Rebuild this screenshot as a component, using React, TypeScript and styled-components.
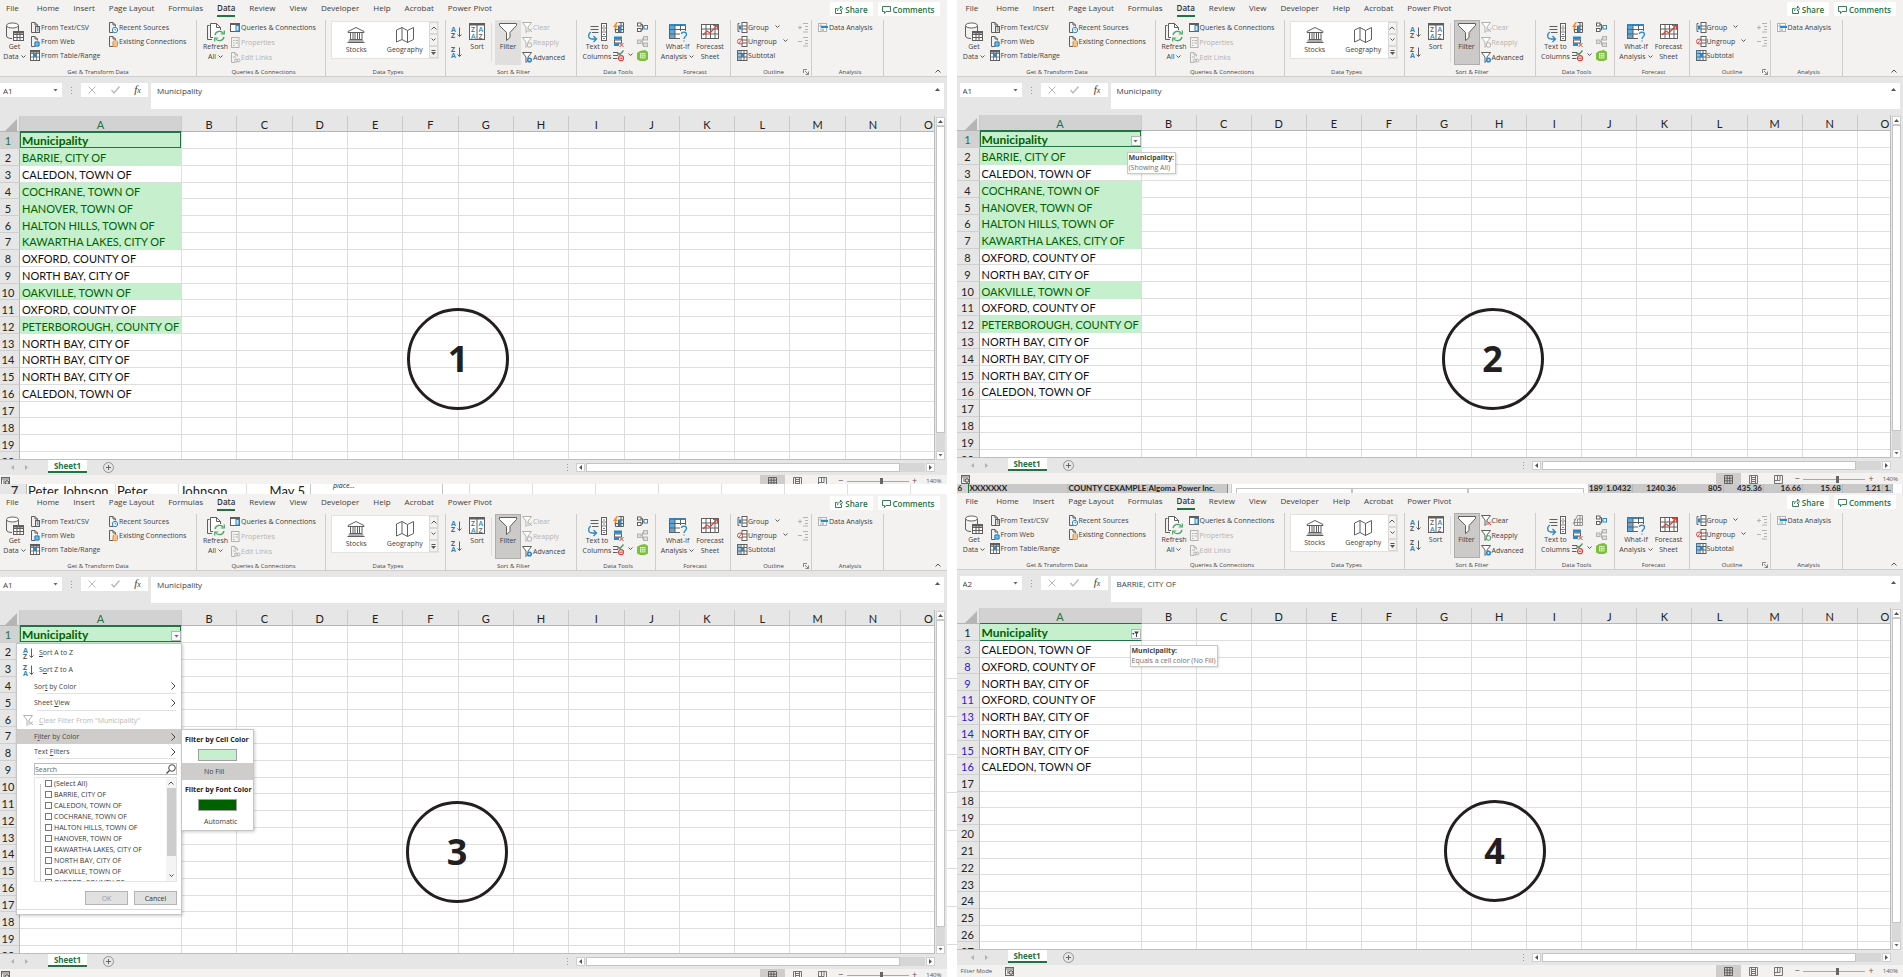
import React from "react";
import styled, { createGlobalStyle, css } from "styled-components";

const UI = `"Open Sans", "Noto Sans", sans-serif`;
const SHEET = `Lato, "Open Sans", sans-serif`;

const GlobalStyle = createGlobalStyle`
  * { box-sizing: border-box; }
  body { margin: 0; background: #fff; font-family: ${UI}; color: #404040; }
  button, input { font: inherit; color: inherit; margin: 0; padding: 0; border: 0; background: none; border-radius: 0; }
  button { white-space: nowrap; }
  svg { display: block; flex: none; overflow: visible; }
`;

/* ---------- icons ---------- */

const G = "#5f5f5f";
const B = "#2b88c8";
const L = "#b4b2b0";

type IconName =
  | "getData" | "csv" | "web" | "range" | "recent" | "existing" | "refresh" | "queries" | "properties"
  | "links" | "bank" | "map" | "sortAZ" | "sortZA" | "sort" | "funnel" | "clear" | "clearOn" | "reapply"
  | "reapplyOn" | "advanced" | "columns" | "flash" | "flashOff" | "dupes" | "validate" | "consolidate"
  | "relations" | "model" | "whatIf" | "forecast" | "group" | "ungroup" | "subtotal" | "showDetail"
  | "hideDetail" | "analysis" | "share" | "comment" | "chevDown" | "chevUp" | "chevRight" | "launcher"
  | "triDown" | "triUp" | "triLeft" | "triRight" | "more" | "cross" | "check" | "plus" | "search" | "macro"
  | "viewNormal" | "viewPage" | "viewBreak" | "corner" | "filtered" | "grip";

const page = (c: string) => <path d="M5 10.500H1.500V.5H5L7.500 3V4.500M5 .5V3H7.500" fill="none" stroke={c} />;
const smallFunnel = (c: string) => <path d="M.5.500H9.500L6 5V8.500L4 10.500V5Z" fill="#fff" stroke={c} />;

const icons: Record<IconName, [number, number, React.ReactNode]> = {
  getData: [20, 20, <>
    <path d="M1.500 3.500V14C1.500 15.500 4 16.500 7 16.500M13.500 3.500V9" fill="none" stroke={G} />
    <ellipse cx="7.500" cy="3.500" rx="6" ry="2.500" fill="#fff" stroke={G} />
    <rect x="8.500" y="9.500" width="10" height="9" fill="#fff" stroke={G} />
    <path d="M8.500 12.500H18.500M8.500 15.500H18.500M12 9.500V18.500M15 9.500V18.500" stroke={G} />
    <path d="M9 10.500H18" stroke={G} strokeWidth="2" /></>],
  csv: [11, 11, <>{page(G)}<rect x="5.500" y="4.500" width="4" height="6" fill="#ddd" stroke={G} /><path d="M7 6H8.500M7 8H8.500" stroke={G} /></>],
  web: [11, 11, <>{page(G)}<circle cx="7" cy="8" r="3" fill={B} /><path d="M4 8H10M7 5V11" stroke="#bfe0f5" strokeWidth=".6" /></>],
  range: [11, 11, <><rect x=".5" y=".5" width="9" height="10" fill="#fff" stroke={G} /><path d="M.5 3.500H9.500M.5 7H9.500M3.500 .5V10.500M6.500 .5V10.500" stroke={G} strokeWidth=".8" /><path d="M0 1.500H10" stroke={G} strokeWidth="2" /><rect x="3.500" y="3.500" width="3" height="3.500" fill={B} /></>],
  recent: [11, 11, <>{page(G)}<circle cx="7" cy="8" r="2.700" fill="#fff" stroke={B} /><path d="M7 6.500V8H8.500" fill="none" stroke={B} strokeWidth=".8" /></>],
  existing: [11, 11, <>{page(G)}<rect x="5" y="5" width="4.500" height="5.500" rx="1" fill="#fff" stroke="#e08a2c" /><path d="M5 7H9.500M5 9H9.500" stroke="#e08a2c" /></>],
  refresh: [20, 20, <>
    <path d="M3.500 3.500H1.500V17.500H6" fill="none" stroke={G} />
    <path d="M14.500 8V5.500L10.500 1.500H4.500V15.500H7M10.500 1.500V5.500H14.500" fill="#fff" stroke={G} />
    <circle cx="13.500" cy="14" r="6" fill="#f3f2f1" />
    <path d="M9 13A4.700 4.700 0 0 1 17.500 11.500M18 15A4.700 4.700 0 0 1 9.500 16.500" fill="none" stroke="#4aa564" strokeWidth="1.300" />
    <path d="M18.300 8.500V12H14.800M8.700 19.500V16H12.200" fill="none" stroke="#4aa564" strokeWidth="1.200" /></>],
  queries: [11, 11, <><rect x=".5" y="1.500" width="9" height="8" fill="#fff" stroke={G} /><path d="M0 2H10" stroke={G} strokeWidth="2" /><rect x="6" y="3.500" width="3" height="5.500" fill="#cfe6f5" stroke={B} /></>],
  properties: [11, 11, <><rect x="1.500" y=".5" width="7.500" height="10" fill="none" stroke={L} /><path d="M3 3.500H4.500M5.500 3.500H8M3 6H4.500M5.500 6H8M3 8.500H4.500" stroke={L} /></>],
  links: [11, 11, <>{page(L)}<circle cx="6" cy="8.500" r="1.500" fill="none" stroke={L} /><circle cx="8.500" cy="8.500" r="1.500" fill="none" stroke={L} /><path d="M3 5H6" stroke={L} /></>],
  bank: [20, 18, <>
    <path d="M2 5.500L10 1.500L18 5.500V6.500H2ZM3.500 13.500H16.500M2.500 15H17.500M1.500 16.500H18.500" fill="none" stroke={G} />
    <path d="M4.500 6.500V13M7 6.500V13M9 6.500V13M11.500 6.500V13M13.500 6.500V13M16 6.500V13" stroke={G} /></>],
  map: [20, 18, <path d="M1.500 4L7 1.500L12.500 4.500L18.500 1.500V13.500L12.500 16.500L7 13.500L1.500 16ZM7 1.500V13.500M12.500 4.500V16.500" fill="#fff" stroke={G} />],
  sortAZ: [11, 12, <><text x="0" y="5.500" fontSize="7" fontWeight="700" fill={B}>A</text><text x="0" y="11.500" fontSize="7" fontWeight="700" fill={G}>Z</text><path d="M8.500 1.500V10.500M6.500 8.500L8.500 10.500L10.500 8.500" fill="none" stroke={G} /></>],
  sortZA: [11, 12, <><text x="0" y="5.500" fontSize="7" fontWeight="700" fill={G}>Z</text><text x="0" y="11.500" fontSize="7" fontWeight="700" fill={B}>A</text><path d="M8.500 1.500V10.500M6.500 8.500L8.500 10.500L10.500 8.500" fill="none" stroke={G} /></>],
  sort: [18, 20, <>
    <rect x="1.500" y="1.500" width="15" height="16" fill="#fff" stroke={G} /><path d="M1 2.500H17" stroke={G} strokeWidth="2" /><path d="M9 2V17.500" stroke={G} />
    <text x="3" y="10" fontSize="7" fontWeight="600" fill={G}>Z</text><text x="3" y="16.500" fontSize="7" fontWeight="600" fill={B}>A</text>
    <text x="10.500" y="10" fontSize="7" fontWeight="600" fill={B}>A</text><text x="10.500" y="16.500" fontSize="7" fontWeight="600" fill={G}>Z</text></>],
  funnel: [20, 20, <path d="M1.500 1.500H18.500V3.500L12 10.500V15.500L8.500 18.500V10.500L1.500 3.500Z" fill="#fff" stroke={G} />],
  clear: [11, 11, <>{smallFunnel(L)}<path d="M6.500 6.500L10 10M10 6.500L6.500 10" stroke={L} /></>],
  clearOn: [11, 11, <>{smallFunnel(G)}<path d="M6.500 6.500L10 10M10 6.500L6.500 10" stroke="#d9453d" /></>],
  reapply: [11, 11, <>{smallFunnel(L)}<circle cx="7.500" cy="8" r="2.300" fill="#f3f2f1" stroke={L} /></>],
  reapplyOn: [11, 11, <>{smallFunnel(G)}<circle cx="7.500" cy="8" r="2.300" fill="#f3f2f1" stroke="#3a9a57" /></>],
  advanced: [11, 11, <>{smallFunnel(G)}<circle cx="7.500" cy="8" r="1.800" fill="#cfe6f5" stroke={B} strokeWidth="1.500" /></>],
  columns: [20, 20, <>
    <path d="M3.500 4.500H11.500M3.500 7.500H11.500M5 10.500H11.500" stroke={G} />
    <rect x="14.500" y="1.500" width="5" height="17" fill="#fff" stroke={G} /><path d="M14.500 6H19.500M14.500 10H19.500M14.500 14.500H19.500M16 4H18M16 8H18M16 12.500H18M16 16.500H18" stroke={G} strokeWidth=".8" />
    <path d="M4 10C.5 12 1 17 5 17H9M6.500 14L9.500 17L6.500 20" fill="none" stroke={B} strokeWidth="1.300" /></>],
  flash: [11, 11, <><path d="M2.500 4V10.500H10.500V.5H5.500M5.500 4V10.500M2.500 7.500H10.500M5.500 4H10.500M8 .5V10.500" fill="none" stroke={G} /><rect x="6" y="4" width="2" height="6" fill={B} /><path d="M3.500 0L0 5H2L1 9L5 3.500H3L5 0Z" fill="#f28a2a" /></>],
  flashOff: [11, 11, <path d="M2.500 4V10.500H10.500V.5H5.500L1 9M5.500 4V10.500M2.500 7.500H10.500M5.500 4H10.500M8 .5V10.500" fill="none" stroke="#929090" />],
  dupes: [11, 11, <><rect x="1" y=".5" width="8" height="3" fill={B} /><rect x="1.500" y="4" width="7" height="3" fill="#fff" stroke={G} /><rect x="1" y="7" width="5" height="3" fill={B} /><path d="M6.500 7L10.500 11M10.500 7L6.500 11" stroke="#d9453d" /></>],
  validate: [11, 11, <><path d="M0 2.500H5V5.500H0M0 8.500H4.500" fill="none" stroke={G} /><path d="M5.500 3L7 4.500L10.500 .5" fill="none" stroke="#3a9a57" strokeWidth="1.200" /><circle cx="8" cy="8.200" r="2.500" fill="#fff" stroke="#d9453d" strokeWidth="1.200" /><path d="M6.500 8.200H9.500" stroke="#d9453d" strokeWidth="1.200" /></>],
  consolidate: [11, 11, <><rect x=".5" y="1" width="3.500" height="3" fill="#fff" stroke={G} /><rect x=".5" y="6.500" width="3.500" height="3" fill="#fff" stroke={G} /><path d="M4 2.500H5.500V8H4M5.500 5.300H7" fill="none" stroke={G} /><rect x="7" y="3.500" width="3.500" height="3.500" fill="#fff" stroke={B} /></>],
  relations: [11, 11, <><rect x=".5" y="4" width="3.500" height="3.500" fill="#ddd" stroke={L} /><rect x="6.500" y=".5" width="4" height="3.500" fill="#ddd" stroke={L} /><rect x="6.500" y="7" width="4" height="3.500" fill="#ddd" stroke={L} /><path d="M4 5.500H5.500V2.500H6.500M5.500 5.500V9H6.500" fill="none" stroke={L} /></>],
  model: [11, 11, <><path d="M3 1L8 0L11 2V9.500L8 11H3L0 9.500V3Z" fill="#7cbf3c" /><rect x="3.500" y="3.500" width="4.500" height="4.500" fill="none" stroke="#e6f5d8" strokeWidth=".8" /><path d="M3.500 5.800H8M5.800 3.500V8" stroke="#e6f5d8" strokeWidth=".8" /></>],
  whatIf: [20, 20, <>
    <rect x="1.500" y="2.500" width="16" height="14" fill="#fff" stroke={G} /><rect x="2" y="3" width="5" height="13" fill={B} opacity=".75" /><path d="M1 3H18" stroke={B} strokeWidth="2" />
    <path d="M1.500 7.500H17.500M1.500 12H17.500M7 2.500V16.500M12.500 2.500V16.500" stroke={G} />
    <rect x="12" y="9" width="8" height="11" fill="#f3f2f1" />
    <path d="M13.500 12C13.500 9.500 18.500 9.500 18.500 12.500C18.500 14.500 16 14.500 16 17M16 18.500V19.500" fill="none" stroke={B} strokeWidth="1.300" /></>],
  forecast: [20, 20, <>
    <rect x="1.500" y="2.500" width="17" height="14" fill="#fff" stroke={G} /><path d="M1.500 7H18.500M1.500 12H18.500M6 2.500V16.500M10.500 2.500V16.500M15 2.500V16.500" stroke={G} />
    <path d="M3 13L7 9L10 11L17 3.500M13 3.500H17.500V7.500" fill="none" stroke="#d9453d" strokeWidth="1.200" /></>],
  group: [11, 11, <><rect x="5" y=".5" width="5" height="10" fill="#fff" stroke={G} /><path d="M5 4H10M5 7H10M2.500 1.500H1V9.500H2.500" fill="none" stroke={G} /><rect x="2" y="3.500" width="2.500" height="4" fill={B} /></>],
  ungroup: [11, 11, <><rect x="5" y=".5" width="5" height="10" fill="#fff" stroke={G} /><path d="M5 4H10M5 7H10" stroke={G} /><circle cx="3" cy="5.500" r="2.500" fill="#fff" stroke="#d9453d" /><path d="M1.500 7.500L5 3.500" stroke="#d9453d" /></>],
  subtotal: [11, 11, <><rect x=".5" y=".5" width="9.500" height="10" fill="#fff" stroke={G} /><path d="M.5 3.500H10M.5 7H10M4 .5V10.500M7 .5V10.500" stroke={G} /><rect x="4" y="3.500" width="3" height="3.500" fill={B} /><rect x="0" y="0" width="3" height="10" fill={B} opacity=".5" /></>],
  showDetail: [11, 11, <path d="M0 5.500H4M2 3.500V7.500M5 1.500H10M7 4.500H10M7 7.500H10M5 10H10" stroke={L} />],
  hideDetail: [11, 11, <path d="M0 5.500H4M5 1.500H10M7 4.500H10M7 7.500H10M5 10H10" stroke={L} />],
  analysis: [11, 11, <><rect x=".5" y="1.500" width="8" height="8" fill="#fff" stroke={L} /><path d="M.5 4H8.500M3 1.500V9.500" stroke={L} /><rect x="3" y="4" width="7" height="2" fill={B} /><rect x="4" y="6.500" width="2" height="3.500" fill="#9cc8e6" /></>],
  share: [9, 9, <path d="M3.500 3.500H1.500V8.500H7.500V6M3.500 6C3.500 4 5 3 6.500 3V1L8.500 3.500L6.500 6V4.500" fill="none" stroke="#217346" strokeWidth=".9" />],
  comment: [9, 9, <path d="M.5 1.500H8.500V6.500H4L2.500 8.500V6.500H.5Z" fill="none" stroke="#217346" strokeWidth=".9" />],
  chevDown: [5, 4, <path d="M.5 .5L2.500 2.500L4.500 .5" fill="none" stroke="#555" />],
  chevUp: [6, 4, <path d="M.5 3.500L3 1L5.500 3.500" fill="none" stroke="#555" />],
  chevRight: [5, 8, <path d="M.5 .5L4 4L.5 7.500" fill="none" stroke="#444" />],
  launcher: [6, 6, <path d="M.5 4V.5H4M2 2L5.500 5.500M5.500 2.500V5.500H2.500" fill="none" stroke="#777" strokeWidth=".9" />],
  triDown: [5, 3, <path d="M.5 0H4.500L2.500 2.500Z" fill="#666" />],
  triUp: [5, 3, <path d="M0 3H5L2.500 0Z" fill="#555" />],
  triLeft: [3, 5, <path d="M3 0V5L0 2.500Z" fill="currentColor" />],
  triRight: [3, 5, <path d="M0 0V5L3 2.500Z" fill="currentColor" />],
  more: [5, 5, <><path d="M.5 .5H4.500" stroke="#555" /><path d="M0 2H5L2.500 5Z" fill="#555" /></>],
  cross: [8, 8, <path d="M.5 .5L7.500 7.500M7.500 .5L.5 7.500" stroke="#b8b8b8" />],
  check: [9, 8, <path d="M.5 4L3 7L8.500 .5" fill="none" stroke="#b8b8b8" strokeWidth="1.300" />],
  plus: [11, 11, <><circle cx="5.500" cy="5.500" r="5" fill="none" stroke="#808080" strokeWidth=".8" /><path d="M3 5.500H8M5.500 3V8" stroke="#666" /></>],
  search: [10, 10, <><circle cx="6" cy="4" r="3.300" fill="none" stroke="#444" /><path d="M3.500 6.500L.5 9.500" stroke="#444" strokeWidth="1.200" /></>],
  macro: [9, 9, <><rect x=".5" y=".5" width="8" height="8" fill="none" stroke="#666" /><path d="M.5 2H8.500M2 4H4M2 6H4" stroke="#666" /><circle cx="6" cy="5.500" r="1.800" fill="#ddd" stroke="#444" /></>],
  viewNormal: [9, 9, <path d="M.5 .5H8.500V8.500H.5ZM3.200 .5V8.500M5.800 .5V8.500M.5 3.200H8.500M.5 5.800H8.500" fill="none" stroke="#555" strokeWidth=".9" />],
  viewPage: [9, 9, <path d="M.5 .5H8.500V8.500H.5ZM2.500 .5V8.500M6.500 .5V8.500M2.500 2.500H6.500M2.500 4.500H6.500M2.500 6.500H6.500" fill="none" stroke="#666" strokeWidth=".9" />],
  viewBreak: [9, 9, <path d="M.5 .5H8.500V8.500H.5ZM3.500 .5V5.500H.5M3.500 5.500H6V.5" fill="none" stroke="#666" strokeWidth=".9" />],
  corner: [12, 12, <path d="M12 0V12H0Z" fill="#b5b5b5" />],
  filtered: [7, 6, <path d="M2 .5H7L5 3V6H4V3ZM0 2H2.500L1.300 4Z" fill="#444" />],
  grip: [3, 9, <path d="M1.500 1V2M1.500 4V5M1.500 7V8" stroke="#999" />],
};

const Icon = ({ name }: { name: IconName }) => {
  const [w, h, body] = icons[name];
  return <svg width={w} height={h} viewBox={`0 0 ${w} ${h}`} aria-hidden="true">{body}</svg>;
};

/* ---------- page ---------- */

const Page = styled.main`
  display: grid;
  grid-template-columns: minmax(0, 1fr) 10px minmax(0, 1fr);
  min-height: 100vh;
`;
const Column = styled.div`
  display: flex;
  flex-direction: column;
  min-width: 0;
  overflow: hidden;
`;
const Gutter = styled.div`
  background: repeating-linear-gradient(#fff 0 37px, #dcdcdc 37px 38px);
  margin-top: 641px;
`;
const Window = styled.section<{ $grow?: boolean }>`
  display: flex;
  flex-direction: column;
  flex: ${p => (p.$grow ? "1 1 auto" : "none")};
  background: #f3f2f1;
`;

/* ---------- ribbon ---------- */

const TabRow = styled.nav<{ $inset: number }>`
  display: flex;
  align-items: center;
  gap: 14px;
  height: 18px;
  padding: 0 7px 0 ${p => 6 + p.$inset}px;
  font-size: 8px;
`;
const Tab = styled.button<{ $active?: boolean }>`
  height: 16px;
  line-height: 14px;
  border-bottom: 2px solid transparent;
  &:first-child { margin-right: 4px; }
  ${p => p.$active && css`
    font-weight: 600;
    color: #333;
    border-color: #217346;
  `}
`;
const Actions = styled.div`
  display: flex;
  gap: 5px;
  margin-left: auto;
`;
const ActionButton = styled.button`
  display: flex;
  align-items: center;
  gap: 2px;
  height: 14px;
  padding: 0 5px 0 4px;
  border-radius: 1px;
  background: #fff;
  color: #217346;
  font-weight: 600;
`;
const RibbonBody = styled.div`
  display: flex;
  height: 59px;
  padding: 2px 0 0;
  border-bottom: 1px solid #d0cecc;
  font-size: 7px;
`;
const Group = styled.section<{ $width: number; $inset: number }>`
  display: flex;
  flex-direction: column;
  flex: 0 0 ${p => p.$width}px;
  padding-left: ${p => p.$inset}px;
  border-right: 1px solid #cfcdcb;
`;
const GroupBody = styled.div`
  display: flex;
  flex: none;
  align-items: flex-start;
  height: 48px;
`;
const GroupLabel = styled.footer`
  height: 8px;
  font-size: 6px;
  line-height: 8px;
  text-align: center;
  color: #444;
`;
const Launcher = styled.button`
  position: absolute;
  right: 2px;
  top: 1px;
`;
const LabelWrap = styled.div`
  position: relative;
`;
const BigButton = styled.button<{ $width: number; $on?: "soft" | "strong" }>`
  display: flex;
  flex-direction: column;
  align-items: center;
  width: ${p => p.$width}px;
  height: 45px;
  padding-top: 2px;
  line-height: 10px;
  ${p => p.$on === "soft" && css`background: #e1dfdd;`}
  ${p => p.$on === "strong" && css`background: #cccac8; box-shadow: inset 0 0 0 1px #b0aeac;`}
`;
const WithChevron = styled.span`
  display: flex;
  align-items: center;
  gap: 2px;
`;
const Stack = styled.div<{ $width?: number }>`
  display: flex;
  flex-direction: column;
  width: ${p => (p.$width ? `${p.$width}px` : "auto")};
`;
const SmallButton = styled.button<{ $tall?: boolean; $off?: boolean }>`
  display: flex;
  align-items: center;
  height: ${p => (p.$tall ? 15 : 14)}px;
  padding-left: 1px;
  color: ${p => (p.$off ? "#b4b2b0" : "inherit")};
`;
const OptionRow = styled.span`
  padding-left: 6px;
`;
const IconButton = styled.button<{ $height: number }>`
  display: flex;
  align-items: center;
  gap: 4px;
  height: ${p => p.$height}px;
`;
const ThinRule = styled.span`
  align-self: stretch;
  width: 1px;
  margin: 3px 3px 6px 3px;
  background: #dedcda;
`;
const Gallery = styled.div`
  display: flex;
  width: 108px;
  height: 38px;
  margin-top: 1px;
  background: #fff;
  border: 1px solid #e4e2e0;
`;
const GalleryItem = styled.button`
  display: flex;
  flex: 1;
  flex-direction: column;
  align-items: center;
  padding-top: 4px;
  line-height: 12px;
`;
const GallerySteps = styled.div`
  display: grid;
  grid-template-rows: repeat(3, 1fr);
  width: 9px;
  background: #f3f2f1;
`;
const Step = styled.button`
  display: grid;
  place-items: center;
  border: 1px solid #dad8d6;
`;
const Collapse = styled.button`
  align-self: flex-end;
  margin: 0 6px 3px auto;
`;

/* ---------- formula bar ---------- */

const FormulaBar = styled.div<{ $height: number; $inset: number }>`
  display: flex;
  align-items: flex-start;
  height: ${p => p.$height}px;
  padding: 6px 3px 0 ${p => p.$inset}px;
  background: #e6e6e6;
  font-size: 8px;
`;
const NameBox = styled.label`
  display: flex;
  align-items: center;
  width: 62px;
  height: 14px;
  padding: 0 4px 0 3px;
  background: #fff;
  input { flex: 1; min-width: 0; }
`;
const BarGrip = styled.span`
  margin: 3px 8px 0 8px;
`;
const FormulaTools = styled.div`
  display: flex;
  align-items: center;
  justify-content: space-around;
  width: 67px;
  height: 14px;
  margin-right: 3px;
  background: #fff;
  i { font: italic 11px/14px "Liberation Serif", serif; }
  sub { font-size: 8px; vertical-align: baseline; }
`;
const FormulaField = styled.label`
  display: flex;
  flex: 1;
  align-items: flex-start;
  height: 26px;
  padding: 0 4px 0 6px;
  background: #fff;
  input { flex: 1; height: 15px; }
  svg { margin-top: 5px; }
`;

/* ---------- sheet ---------- */

const SheetArea = styled.div<{ $height: number }>`
  position: relative;
  display: flex;
  height: ${p => p.$height}px;
  background: #e6e6e6;
`;
const Viewport = styled.div`
  flex: 1;
  min-width: 0;
  overflow: hidden;
  border-right: 1px solid #bdbdbd;
  border-bottom: 1px solid #bdbdbd;
`;
const Table = styled.table<{ $height: number }>`
  width: calc(100% + 23px);
  height: ${p => p.$height}px;
  table-layout: fixed;
  border-spacing: 0;
  background: #fff;
  font-family: ${SHEET};
  font-size: 11px;
  line-height: 13px;
  color: #111;
  white-space: nowrap;
  th, td { padding: 2px 0 0; }
`;
const HeadCol = styled.col<{ $width: number }>`
  width: ${p => p.$width}px;
`;
const ColumnHead = styled.th<{ $active?: boolean }>`
  height: 16px;
  font-weight: 400;
  color: ${p => (p.$active ? "#217346" : "#222")};
  background: ${p => (p.$active ? "#d2d2d2" : "#e6e6e6")};
  border-right: 1px solid #c9c9c9;
  border-bottom: 1px solid ${p => (p.$active ? "#217346" : "#b5b5b5")};
`;
const CornerHead = styled.th`
  background: #e6e6e6;
  border-right: 1px solid #c9c9c9;
  border-bottom: 1px solid #b5b5b5;
  svg { margin: 0 2px 0 auto; }
`;
const RowHead = styled.th<{ $active?: boolean; $blue?: boolean; $shift: number }>`
  font-weight: 400;
  color: ${p => (p.$active ? "#217346" : p.$blue ? "#2a22c8" : "#222")};
  background: ${p => (p.$active ? "#d2d2d2" : "#e6e6e6")};
  border-right: 1px solid #b5b5b5;
  border-bottom: 1px solid #cfcfcf;
  && { padding-right: ${p => p.$shift}px; }
`;
const Cell = styled.td<{ $filled?: boolean; $title?: boolean; $selected?: boolean; $underline?: boolean }>`
  border-right: 1px solid #dedede;
  border-bottom: 1px solid #dedede;
  && { padding-left: 2px; }
  ${p => p.$filled && css`
    color: #006100;
    background: #c6efce;
    border-bottom-color: #c6efce;
  `}
  ${p => p.$title && css`
    font-size: 12px;
    font-weight: 700;
  `}
  ${p => p.$selected && css`box-shadow: inset 0 0 0 1px #217346;`}
  ${p => p.$underline && css`border-bottom-color: #217346;`}
`;
const TitleCell = styled.div`
  display: flex;
  justify-content: space-between;
  align-items: flex-end;
  height: 13px;
`;
const FilterButton = styled.button`
  display: grid;
  place-items: center;
  width: 10px;
  height: 10px;
  background: #f6f8fb;
  border: 1px solid #b5b5b5;
`;
const VScroll = styled.div`
  display: flex;
  flex-direction: column;
  align-items: center;
  width: 12px;
  padding: 1px 2px 0 1px;
  background: #e6e6e6;
`;
const ScrollButton = styled.button`
  display: grid;
  place-items: center;
  flex: none;
  width: 9px;
  height: 9px;
  background: #fff;
  border: 1px solid #cfcfcf;
  color: #555;
`;
const VTrack = styled.div`
  flex: 1;
  align-self: stretch;
  padding-bottom: 18px;
  background: #d9d9d9;
`;
const VThumb = styled.div`
  height: 100%;
  background: #fff;
  border: 1px solid #c4c4c4;
`;
const Badge = styled.div<{ $left: number; $top: number }>`
  position: absolute;
  left: ${p => p.$left}px;
  top: ${p => p.$top}px;
  width: 102px;
  height: 102px;
  border: 3px solid #231f20;
  border-radius: 50%;
  font-size: 36px;
  font-weight: 700;
  line-height: 96px;
  text-align: center;
  color: #231f20;
`;
const Tooltip = styled.div<{ $left: number }>`
  position: absolute;
  left: ${p => p.$left}px;
  top: 37px;
  padding: 0 1px;
  background: #fff;
  border: 1px solid #c8c8c8;
  box-shadow: 1px 1px 2px #0002;
  font-size: 7px;
  line-height: 10px;
  color: #707070;
  white-space: nowrap;
  b { display: block; color: #444; }
`;

/* ---------- filter menu ---------- */

const Menu = styled.div`
  position: absolute;
  left: 16px;
  top: 33px;
  width: 166px;
  background: #fff;
  border: 1px solid #c6c6c6;
  box-shadow: 1px 1px 3px #0003;
  font-size: 7px;
`;
const MenuItem = styled.button<{ $height: number; $active?: boolean; $off?: boolean }>`
  display: grid;
  grid-template-columns: 15px 1fr 5px;
  align-items: center;
  width: 100%;
  height: ${p => p.$height}px;
  padding: 0 5px 0 6px;
  text-align: left;
  background: ${p => (p.$active ? "#cfcdcb" : "transparent")};
  color: ${p => (p.$off ? "#b8b8b8" : "#444")};
`;
const MenuText = styled.span<{ $indent?: boolean }>`
  margin-left: ${p => (p.$indent ? -4 : 1)}px;
`;
const MenuRule = styled.hr`
  height: 1px;
  margin: -1px 5px 0 20px;
  border: 0;
  background: #e2e2e2;
`;
const SearchBox = styled.label`
  display: flex;
  align-items: center;
  height: 12px;
  margin: 4px 4px 2px 17px;
  border: 1px solid #bdbdbd;
  input { flex: 1; min-width: 0; }
  input::placeholder { color: #666; opacity: 1; }
`;
const ListBox = styled.div`
  display: flex;
  height: 105px;
  margin: 0 4px 0 17px;
  border: 1px solid #e4e4e4;
  overflow: hidden;
`;
const CheckList = styled.div`
  flex: 1;
  margin-left: 5px;
  padding-left: 5px;
  background: linear-gradient(#c9c9c9, #c9c9c9) 0 6px / 1px 100% no-repeat;
`;
const CheckRow = styled.label`
  display: flex;
  align-items: center;
  gap: 2px;
  height: 11px;
  color: #333;
  white-space: nowrap;
  input {
    appearance: none;
    flex: none;
    width: 7px;
    height: 7px;
    border: 1px solid #777;
    background: #fff;
  }
`;
const ListScroll = styled.div`
  display: flex;
  flex-direction: column;
  align-items: center;
  justify-content: space-between;
  width: 10px;
  padding: 3px 0;
  background: #f4f4f4;
`;
const ListThumb = styled.div`
  width: 9px;
  height: 68px;
  margin: 3px 0 auto;
  background: #cdcdcd;
`;
const MenuActions = styled.div`
  display: flex;
  justify-content: flex-end;
  gap: 6px;
  padding: 9px 4px 4px;
`;
const DialogButton = styled.button`
  width: 43px;
  height: 14px;
  background: #e1e1e1;
  border: 1px solid #b4b4b4;
  color: #333;
  &:disabled { color: #9a9a9a; }
`;
const MenuFoot = styled.div`
  height: 5px;
  border-top: 1px solid #dcdcdc;
`;
const SubMenu = styled.div`
  position: absolute;
  left: 181px;
  top: 119px;
  display: flex;
  flex-direction: column;
  width: 73px;
  background: #fff;
  border: 1px solid #c6c6c6;
  box-shadow: 1px 1px 3px #0003;
  font-size: 7px;
`;
const SubTitle = styled.b`
  padding-left: 3px;
  line-height: 19px;
  color: #222;
  white-space: nowrap;
`;
const Swatch = styled.button<{ $color: string }>`
  align-self: center;
  width: 39px;
  height: 12px;
  background: ${p => p.$color};
  border: 1px solid #a0a0a0;
`;
const SubItem = styled.button<{ $active?: boolean }>`
  height: 17px;
  margin: 2px 0 0;
  padding-left: 22px;
  text-align: left;
  background: ${p => (p.$active ? "#cfcdcb" : "transparent")};
`;

/* ---------- sheet tabs and status bar ---------- */

const SheetTabs = styled.div<{ $inset: number }>`
  display: flex;
  align-items: center;
  height: 15px;
  padding: 0 12px 0 ${p => 11 + p.$inset}px;
  background: #e6e6e6;
  color: #b0b0b0;
`;
const NavButtons = styled.div`
  display: flex;
  gap: 11px;
  width: 37px;
`;
const SheetTab = styled.button`
  align-self: flex-start;
  width: 39px;
  height: 13px;
  margin-right: 16px;
  background: #fff;
  border-bottom: 2px solid #217346;
  color: #217346;
  font-size: 8px;
  font-weight: 700;
  line-height: 11px;
`;
const HScroll = styled.div`
  display: flex;
  align-items: center;
  gap: 1px;
  flex: 0 0 359px;
`;
const TabGrip = styled.span`
  margin: 0 7px 0 auto;
`;
const HTrack = styled.div`
  flex: 1;
  height: 9px;
  padding-right: 25px;
  background: #d6d6d6;
`;
const HThumb = styled.div`
  height: 100%;
  background: #fff;
  border: 1px solid #c4c4c4;
`;
const StatusBar = styled.footer<{ $height: number; $inset: number }>`
  display: flex;
  align-items: flex-start;
  flex: 1 0 ${p => p.$height}px;
  height: ${p => p.$height}px;
  padding: 0 5px 0 ${p => p.$inset}px;
  overflow: hidden;
  font-size: 6px;
  line-height: 12px;
  color: #555;
`;
const StatusLeft = styled.div`
  display: flex;
  align-items: center;
  gap: 13px;
  height: 12px;
  margin-right: auto;
`;
const ViewButton = styled.button<{ $active?: boolean }>`
  display: grid;
  place-items: center;
  width: 25px;
  height: 13px;
  background: ${p => (p.$active ? "#cfcdcb" : "transparent")};
`;
const ZoomMark = styled.button`
  width: 12px;
  height: 12px;
  font-size: 9px;
  line-height: 12px;
`;
const ZoomSlider = styled.input`
  appearance: none;
  width: 62px;
  height: 12px;
  background: linear-gradient(#a8a8a8, #a8a8a8) center / 100% 1px no-repeat;
  &::-webkit-slider-thumb {
    appearance: none;
    width: 3px;
    height: 7px;
    background: #666;
  }
`;
const ZoomValue = styled.span`
  width: 21px;
  text-align: right;
`;

/* ---------- strips between the windows ---------- */

const Strip = styled.div<{ $height: number; $columns: string; $dark?: boolean }>`
  display: grid;
  grid-template-columns: ${p => p.$columns};
  height: ${p => p.$height}px;
  overflow: hidden;
  background: ${p => (p.$dark ? "#c9c9c9" : "#fff")};
  font-family: ${SHEET};
  font-size: ${p => (p.$dark ? 8 : 13)}px;
  font-weight: ${p => (p.$dark ? 700 : 400)};
  line-height: ${p => (p.$dark ? 8 : 14)}px;
  white-space: nowrap;
  color: #222;
`;
const StripCell = styled.span<{ $right?: boolean; $bg?: string; $edge?: string }>`
  padding: 0 1px;
  text-align: ${p => (p.$right ? "right" : "left")};
  background: ${p => p.$bg || "transparent"};
  border-right: 1px solid ${p => p.$edge || "#b9b9b9"};
`;
const DialogEdge = styled.span`
  margin: 0 3px 1px 0;
  padding-left: 22px;
  border: solid #c4c4c4;
  border-width: 0 1px 1px;
  background: #fff;
  font: italic 7px/3px ${UI};
  overflow: hidden;
`;
const DialogPane = styled.span`
  display: flex;
  align-items: flex-end;
  padding: 0 4px;
  background: #fff;
  i { flex: 1; height: 5px; border: solid #c4c4c4; border-width: 1px 1px 0; }
`;

/* ---------- composed parts ---------- */

const TABS = ["File", "Home", "Insert", "Page Layout", "Formulas", "Data", "Review", "View", "Developer", "Help", "Acrobat", "Power Pivot"];

const Small = ({ icon, children, tall, off }: { icon: IconName; children: React.ReactNode; tall?: boolean; off?: boolean }) => (
  <SmallButton $tall={tall} $off={off}><Icon name={icon} />{children}</SmallButton>
);

const Big = ({ icon, lines, width, menu, on }: { icon: IconName; lines: string[]; width: number; menu?: boolean; on?: "soft" | "strong" }) => (
  <BigButton $width={width} $on={on}>
    <Icon name={icon} />
    {lines.map((line, i) => (
      <WithChevron key={line}>{line}{menu && i === lines.length - 1 && <Icon name="chevDown" />}</WithChevron>
    ))}
  </BigButton>
);

const RibbonGroup = ({ label, width, inset = 5, launcher, children }: { label: string; width: number; inset?: number; launcher?: boolean; children: React.ReactNode }) => (
  <Group $width={width} $inset={inset}>
    <GroupBody>{children}</GroupBody>
    <LabelWrap>
      <GroupLabel>{label}</GroupLabel>
      {launcher && <Launcher aria-label="Outline settings"><Icon name="launcher" /></Launcher>}
    </LabelWrap>
  </Group>
);

const Ribbon = ({ inset, filterOn, filtered }: { inset: number; filterOn: "soft" | "strong"; filtered?: boolean }) => (
  <>
    <TabRow $inset={inset}>
      {TABS.map(t => <Tab key={t} $active={t === "Data"}>{t}</Tab>)}
      <Actions>
        <ActionButton><Icon name="share" />Share</ActionButton>
        <ActionButton><Icon name="comment" />Comments</ActionButton>
      </Actions>
    </TabRow>
    <RibbonBody>
      <RibbonGroup label="Get & Transform Data" width={inset ? 199 : 197} inset={inset}>
        <Big icon="getData" lines={["Get", "Data"]} width={29} menu />
        <Stack $width={78}>
          <Small icon="csv">From Text/CSV</Small>
          <Small icon="web">From Web</Small>
          <Small icon="range">From Table/Range</Small>
        </Stack>
        <Stack>
          <Small icon="recent">Recent Sources</Small>
          <Small icon="existing">Existing Connections</Small>
        </Stack>
      </RibbonGroup>
      <RibbonGroup label="Queries & Connections" width={129}>
        <Big icon="refresh" lines={["Refresh", "All"]} width={27} menu />
        <Stack>
          <Small icon="queries" tall>Queries &amp; Connections</Small>
          <Small icon="properties" tall off>Properties</Small>
          <Small icon="links" tall off>Edit Links</Small>
        </Stack>
      </RibbonGroup>
      <RibbonGroup label="Data Types" width={120}>
        <Gallery>
          <GalleryItem><Icon name="bank" />Stocks</GalleryItem>
          <GalleryItem><Icon name="map" />Geography</GalleryItem>
          <GallerySteps>
            <Step aria-label="Previous data types"><Icon name="chevUp" /></Step>
            <Step aria-label="Next data types"><Icon name="chevDown" /></Step>
            <Step aria-label="All data types"><Icon name="more" /></Step>
          </GallerySteps>
        </Gallery>
      </RibbonGroup>
      <RibbonGroup label="Sort & Filter" width={131}>
        <Stack $width={15}>
          <IconButton $height={24} aria-label="Sort A to Z"><Icon name="sortAZ" /></IconButton>
          <IconButton $height={16} aria-label="Sort Z to A"><Icon name="sortZA" /></IconButton>
        </Stack>
        <Big icon="sort" lines={["Sort"]} width={22} />
        <ThinRule />
        <Big icon="funnel" lines={["Filter"]} width={26} on={filterOn} />
        <Stack>
          <Small icon={filtered ? "clearOn" : "clear"} tall off={!filtered}>Clear</Small>
          <Small icon={filtered ? "reapplyOn" : "reapply"} tall off={!filtered}>Reapply</Small>
          <Small icon="advanced" tall>Advanced</Small>
        </Stack>
      </RibbonGroup>
      <RibbonGroup label="Data Tools" width={79} inset={4}>
        <Big icon="columns" lines={["Text to", "Columns"]} width={32} />
        <Stack $width={24}>
          <IconButton $height={14} aria-label="Flash Fill"><Icon name={filtered ? "flashOff" : "flash"} /></IconButton>
          <IconButton $height={14} aria-label="Remove Duplicates"><Icon name="dupes" /></IconButton>
          <IconButton $height={14} aria-label="Data Validation"><Icon name="validate" /><Icon name="chevDown" /></IconButton>
        </Stack>
        <Stack>
          <IconButton $height={14} aria-label="Consolidate"><Icon name="consolidate" /></IconButton>
          <IconButton $height={14} aria-label="Relationships"><Icon name="relations" /></IconButton>
          <IconButton $height={14} aria-label="Data Model"><Icon name="model" /></IconButton>
        </Stack>
      </RibbonGroup>
      <RibbonGroup label="Forecast" width={75} inset={4}>
        <Big icon="whatIf" lines={["What-If", "Analysis"]} width={35} menu />
        <Big icon="forecast" lines={["Forecast", "Sheet"]} width={30} />
      </RibbonGroup>
      <RibbonGroup label="Outline" width={81} launcher>
        <Stack $width={62}>
          <Small icon="group">Group<OptionRow><Icon name="chevDown" /></OptionRow></Small>
          <Small icon="ungroup">Ungroup<OptionRow><Icon name="chevDown" /></OptionRow></Small>
          <Small icon="subtotal">Subtotal</Small>
        </Stack>
        <Stack>
          <IconButton $height={14} aria-label="Show Detail"><Icon name="showDetail" /></IconButton>
          <IconButton $height={14} aria-label="Hide Detail"><Icon name="hideDetail" /></IconButton>
        </Stack>
      </RibbonGroup>
      <RibbonGroup label="Analysis" width={72}>
        <Small icon="analysis">Data Analysis</Small>
      </RibbonGroup>
      <Collapse aria-label="Collapse the ribbon"><Icon name="chevUp" /></Collapse>
    </RibbonBody>
  </>
);

interface RowData { n: number; text?: string; filled?: boolean }

const TOWNS: [string, boolean][] = [
  ["BARRIE, CITY OF", true], ["CALEDON, TOWN OF", false], ["COCHRANE, TOWN OF", true], ["HANOVER, TOWN OF", true],
  ["HALTON HILLS, TOWN OF", true], ["KAWARTHA LAKES, CITY OF", true], ["OXFORD, COUNTY OF", false],
  ["NORTH BAY, CITY OF", false], ["OAKVILLE, TOWN OF", true], ["OXFORD, COUNTY OF", false],
  ["PETERBOROUGH, COUNTY OF", true], ["NORTH BAY, CITY OF", false], ["NORTH BAY, CITY OF", false],
  ["NORTH BAY, CITY OF", false], ["CALEDON, TOWN OF", false],
];
const TOWN_ROWS: RowData[] = TOWNS.map(([text, filled], i) => ({ n: i + 2, text, filled }));
const blankRows = (from: number, to: number): RowData[] =>
  Array.from({ length: to - from + 1 }, (_, i) => ({ n: from + i }));

const ALL_ROWS = [...TOWN_ROWS, ...blankRows(17, 20)];
const COVERED_ROWS = blankRows(2, 20);
const FILTERED_ROWS = [...TOWN_ROWS.filter(r => !r.filled), ...blankRows(17, 27)];
const LETTERS = "BCDEFGHIJKLMNO".split("");

interface SheetProps {
  rows: RowData[];
  height: number;
  tableHeight: number;
  inset: number;
  step: number;
  badgeLeft: number;
  badgeTop: number;
  filter?: "open" | "applied";
  children?: React.ReactNode;
}

const Sheet = ({ rows, height, tableHeight, inset, step, badgeLeft, badgeTop, filter, children }: SheetProps) => {
  const applied = filter === "applied";
  return (
    <SheetArea $height={height}>
      <Viewport>
        <Table $height={tableHeight}>
          <colgroup>
            <HeadCol $width={20 + inset} />
            <HeadCol $width={162} />
          </colgroup>
          <thead>
            <tr>
              <CornerHead aria-label="Select all"><Icon name="corner" /></CornerHead>
              <ColumnHead $active>A</ColumnHead>
              {LETTERS.map(l => <ColumnHead key={l}>{l}</ColumnHead>)}
            </tr>
          </thead>
          <tbody>
            <tr>
              <RowHead $active={!applied} $shift={inset ? 0 : 3}>1</RowHead>
              <Cell $filled $title $selected={!applied} $underline={applied}>
                <TitleCell>
                  Municipality
                  {filter && <FilterButton aria-label="Filter Municipality"><Icon name={applied ? "filtered" : "triDown"} /></FilterButton>}
                </TitleCell>
              </Cell>
              {LETTERS.map(l => <Cell key={l} />)}
            </tr>
            {rows.map(r => (
              <tr key={r.n}>
                <RowHead $shift={inset ? 0 : 3} $blue={applied && !!r.text}>{r.n}</RowHead>
                <Cell $filled={r.filled}>{r.text}</Cell>
                {LETTERS.map(l => <Cell key={l} />)}
              </tr>
            ))}
          </tbody>
        </Table>
      </Viewport>
      <VScroll>
        <ScrollButton aria-label="Scroll up"><Icon name="triUp" /></ScrollButton>
        <VTrack><VThumb /></VTrack>
        <ScrollButton aria-label="Scroll down"><Icon name="triDown" /></ScrollButton>
      </VScroll>
      <Badge $left={badgeLeft} $top={badgeTop}>{step}</Badge>
      {children}
    </SheetArea>
  );
};

interface WorkbookProps extends SheetProps {
  cell: string;
  value: string;
  statusHeight: number;
  mode?: string;
  grow?: boolean;
}

const Workbook = ({ cell, value, statusHeight, mode, grow, ...sheet }: WorkbookProps) => {
  const { inset, filter, step } = sheet;
  return (
    <Window $grow={grow} aria-label={`Step ${step}`}>
      <Ribbon inset={inset} filterOn={filter ? "strong" : "soft"} filtered={filter === "applied"} />
      <FormulaBar $height={inset ? 38 : 39} $inset={inset}>
        <NameBox><input aria-label="Name box" defaultValue={cell} /><Icon name="triDown" /></NameBox>
        <BarGrip><Icon name="grip" /></BarGrip>
        <FormulaTools><Icon name="cross" /><Icon name="check" /><i>f<sub>x</sub></i></FormulaTools>
        <FormulaField><input aria-label="Formula" defaultValue={value} /><Icon name="triUp" /></FormulaField>
      </FormulaBar>
      <Sheet {...sheet} />
      <SheetTabs $inset={inset}>
        <NavButtons><Icon name="triLeft" /><Icon name="triRight" /></NavButtons>
        <SheetTab>Sheet1</SheetTab>
        <Icon name="plus" />
        <TabGrip><Icon name="grip" /></TabGrip>
        <HScroll>
          <ScrollButton aria-label="Scroll left"><Icon name="triLeft" /></ScrollButton>
          <HTrack><HThumb /></HTrack>
          <ScrollButton aria-label="Scroll right"><Icon name="triRight" /></ScrollButton>
        </HScroll>
      </SheetTabs>
      <StatusBar $height={statusHeight} $inset={inset ? 4 : 1}>
        <StatusLeft>{mode && <span>{mode}</span>}<Icon name="macro" /></StatusLeft>
        <ViewButton $active aria-label="Normal view"><Icon name="viewNormal" /></ViewButton>
        <ViewButton aria-label="Page layout view"><Icon name="viewPage" /></ViewButton>
        <ViewButton aria-label="Page break view"><Icon name="viewBreak" /></ViewButton>
        <ZoomMark>−</ZoomMark>
        <ZoomSlider type="range" aria-label="Zoom" min={0} max={100} defaultValue={56} />
        <ZoomMark>+</ZoomMark>
        <ZoomValue>140%</ZoomValue>
      </StatusBar>
    </Window>
  );
};

const CHOICES = ["(Select All)", "BARRIE, CITY OF", "CALEDON, TOWN OF", "COCHRANE, TOWN OF", "HALTON HILLS, TOWN OF",
  "HANOVER, TOWN OF", "KAWARTHA LAKES, CITY OF", "NORTH BAY, CITY OF", "OAKVILLE, TOWN OF", "OXFORD, COUNTY OF"];

const FilterMenu = () => (
  <>
    <Menu>
      <MenuItem $height={17}><Icon name="sortAZ" /><MenuText><u>S</u>ort A to Z</MenuText></MenuItem>
      <MenuItem $height={17}><Icon name="sortZA" /><MenuText>S<u>o</u>rt Z to A</MenuText></MenuItem>
      <MenuItem $height={16}><span /><MenuText $indent>Sor<u>t</u> by Color</MenuText><Icon name="chevRight" /></MenuItem>
      <MenuRule />
      <MenuItem $height={17}><span /><MenuText $indent>Sheet <u>V</u>iew</MenuText><Icon name="chevRight" /></MenuItem>
      <MenuRule />
      <MenuItem $height={18} $off><Icon name="clear" /><MenuText><u>C</u>lear Filter From "Municipality"</MenuText></MenuItem>
      <MenuItem $height={15} $active><span /><MenuText $indent>F<u>i</u>lter by Color</MenuText><Icon name="chevRight" /></MenuItem>
      <MenuItem $height={15}><span /><MenuText $indent>Text <u>F</u>ilters</MenuText><Icon name="chevRight" /></MenuItem>
      <MenuRule />
      <SearchBox><input aria-label="Search" placeholder="Search" /><Icon name="search" /></SearchBox>
      <ListBox>
        <CheckList>
          {CHOICES.map(c => <CheckRow key={c}><input type="checkbox" />{c}</CheckRow>)}
        </CheckList>
        <ListScroll><Icon name="chevUp" /><ListThumb /><Icon name="chevDown" /></ListScroll>
      </ListBox>
      <MenuActions><DialogButton disabled>OK</DialogButton><DialogButton>Cancel</DialogButton></MenuActions>
      <MenuFoot />
    </Menu>
    <SubMenu>
      <SubTitle>Filter by Cell Color</SubTitle>
      <Swatch $color="#c6efce" aria-label="Light green cells" />
      <SubItem $active>No Fill</SubItem>
      <SubTitle>Filter by Font Color</SubTitle>
      <Swatch $color="#006100" aria-label="Dark green text" />
      <SubItem>Automatic</SubItem>
    </SubMenu>
  </>
);

const PeopleStrip = () => (
  <Strip $height={10} $columns="27px 89px 63px 68px 63px 136px 24px repeat(7, 63px) 1fr">
    <StripCell $right $bg="#e6e6e6">7&nbsp;&nbsp;</StripCell>
    <StripCell $edge="#dedede">Peter Johnson</StripCell>
    <StripCell $edge="#dedede">Peter</StripCell>
    <StripCell $edge="#dedede">Johnson</StripCell>
    <StripCell $right $edge="#fff">May 5,</StripCell>
    <DialogEdge>place...</DialogEdge>
    {[0, 1, 2, 3, 4, 5, 6, 7].map(i => <StripCell key={i} $edge="#dedede" />)}
    <StripCell $edge="#fff" />
  </Strip>
);

const PowerStrip = () => (
  <Strip $height={9} $dark $columns="12px 99px 41px 39px 80px 4px 1fr 17px 28px 45px 46px 40px 39px 40px 40px 10px 10px">
    <StripCell $edge="#217346" $bg="#d2d2d2">6</StripCell>
    <StripCell>XXXXXXX</StripCell>
    <StripCell>COUNTY C</StripCell>
    <StripCell>EXAMPLE</StripCell>
    <StripCell $edge="#888">Algoma Power Inc.</StripCell>
    <StripCell $edge="#ccc" $bg="#e6e6e6" />
    <DialogPane><i /><i /><i /></DialogPane>
    {["189", "1.0432", "1240.36", "805", "435.36", "16.66", "15.68", "1.21", "1."].map(v => <StripCell key={v} $right>{v}</StripCell>)}
    <StripCell $bg="#fff" $edge="#e6e6e6" />
  </Strip>
);

export default function App() {
  return (
    <>
      <GlobalStyle />
      <Page>
        <Column>
          <Workbook step={1} badgeLeft={407} badgeTop={192} cell="A1" value="Municipality" rows={ALL_ROWS}
            height={344} tableHeight={353} inset={0} statusHeight={9} />
          <PeopleStrip />
          <Workbook step={3} badgeLeft={406} badgeTop={191} cell="A1" value="Municipality" rows={COVERED_ROWS} filter="open"
            height={344} tableHeight={353} inset={0} statusHeight={8} grow>
            <FilterMenu />
          </Workbook>
        </Column>
        <Gutter />
        <Column>
          <Workbook step={2} badgeLeft={485} badgeTop={193} cell="A1" value="Municipality" rows={ALL_ROWS} filter="open"
            height={343} tableHeight={352} inset={3} statusHeight={11}>
            <Tooltip $left={170}><b>Municipality:</b>(Showing All)</Tooltip>
          </Workbook>
          <PowerStrip />
          <Workbook step={4} badgeLeft={487} badgeTop={192} cell="A2" value="BARRIE, CITY OF" rows={FILTERED_ROWS} filter="applied"
            height={342} tableHeight={351} inset={3} statusHeight={12} mode="Filter Mode" grow>
            <Tooltip $left={173}><b>Municipality:</b>Equals a cell color (No Fill)</Tooltip>
          </Workbook>
        </Column>
      </Page>
    </>
  );
}
